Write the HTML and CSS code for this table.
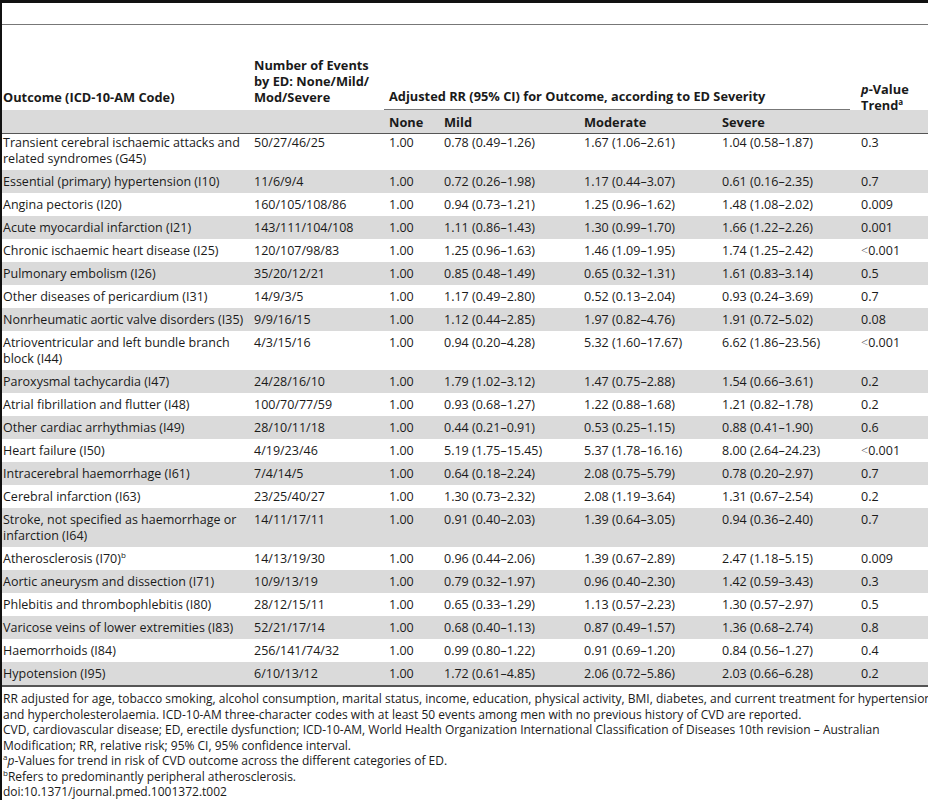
FILE: index.html
```html
<!DOCTYPE html>
<html lang="en">
<head>
    <meta charset="UTF-8">
    <meta name="viewport" content="width=device-width, initial-scale=1.0">
    <title>Table 2. ED severity and CVD outcomes</title>
    <link rel="stylesheet" href="styles.css">
</head>
<body>
    <div class="page">
        <div class="table-box">
            <table class="data">
                <colgroup>
                    <col class="c-outcome">
                    <col class="c-events">
                    <col class="c-none">
                    <col class="c-mild">
                    <col class="c-mod">
                    <col class="c-sev">
                    <col class="c-p">
                </colgroup>
                <thead>
                    <tr class="head-top">
                        <th>Outcome (ICD-10-AM Code)</th>
                        <th>Number of Events by ED: None/Mild/ Mod/Severe</th>
                        <th colspan="4" class="span-head"><div class="under">Adjusted RR (95% CI) for Outcome, according to ED Severity</div></th>
                        <th class="p-head"><div class="p-text"><i>p</i>-Value Trend<sup>a</sup></div></th>
                    </tr>
                    <tr class="head-sub">
                        <th></th>
                        <th></th>
                        <th>None</th>
                        <th>Mild</th>
                        <th>Moderate</th>
                        <th>Severe</th>
                        <th></th>
                    </tr>
                </thead>
                <tbody>
                    <tr><td>Transient cerebral ischaemic attacks and related syndromes (G45)</td><td>50/27/46/25</td><td>1.00</td><td>0.78 (0.49–1.26)</td><td>1.67 (1.06–2.61)</td><td>1.04 (0.58–1.87)</td><td>0.3</td></tr>
                    <tr><td>Essential (primary) hypertension (I10)</td><td>11/6/9/4</td><td>1.00</td><td>0.72 (0.26–1.98)</td><td>1.17 (0.44–3.07)</td><td>0.61 (0.16–2.35)</td><td>0.7</td></tr>
                    <tr><td>Angina pectoris (I20)</td><td>160/105/108/86</td><td>1.00</td><td>0.94 (0.73–1.21)</td><td>1.25 (0.96–1.62)</td><td>1.48 (1.08–2.02)</td><td>0.009</td></tr>
                    <tr><td>Acute myocardial infarction (I21)</td><td>143/111/104/108</td><td>1.00</td><td>1.11 (0.86–1.43)</td><td>1.30 (0.99–1.70)</td><td>1.66 (1.22–2.26)</td><td>0.001</td></tr>
                    <tr><td>Chronic ischaemic heart disease (I25)</td><td>120/107/98/83</td><td>1.00</td><td>1.25 (0.96–1.63)</td><td>1.46 (1.09–1.95)</td><td>1.74 (1.25–2.42)</td><td><span class="lt">&lt;</span>0.001</td></tr>
                    <tr><td>Pulmonary embolism (I26)</td><td>35/20/12/21</td><td>1.00</td><td>0.85 (0.48–1.49)</td><td>0.65 (0.32–1.31)</td><td>1.61 (0.83–3.14)</td><td>0.5</td></tr>
                    <tr><td>Other diseases of pericardium (I31)</td><td>14/9/3/5</td><td>1.00</td><td>1.17 (0.49–2.80)</td><td>0.52 (0.13–2.04)</td><td>0.93 (0.24–3.69)</td><td>0.7</td></tr>
                    <tr><td>Nonrheumatic aortic valve disorders (I35)</td><td>9/9/16/15</td><td>1.00</td><td>1.12 (0.44–2.85)</td><td>1.97 (0.82–4.76)</td><td>1.91 (0.72–5.02)</td><td>0.08</td></tr>
                    <tr><td>Atrioventricular and left bundle branch block (I44)</td><td>4/3/15/16</td><td>1.00</td><td>0.94 (0.20–4.28)</td><td>5.32 (1.60–17.67)</td><td>6.62 (1.86–23.56)</td><td><span class="lt">&lt;</span>0.001</td></tr>
                    <tr><td>Paroxysmal tachycardia (I47)</td><td>24/28/16/10</td><td>1.00</td><td>1.79 (1.02–3.12)</td><td>1.47 (0.75–2.88)</td><td>1.54 (0.66–3.61)</td><td>0.2</td></tr>
                    <tr><td>Atrial fibrillation and flutter (I48)</td><td>100/70/77/59</td><td>1.00</td><td>0.93 (0.68–1.27)</td><td>1.22 (0.88–1.68)</td><td>1.21 (0.82–1.78)</td><td>0.2</td></tr>
                    <tr><td>Other cardiac arrhythmias (I49)</td><td>28/10/11/18</td><td>1.00</td><td>0.44 (0.21–0.91)</td><td>0.53 (0.25–1.15)</td><td>0.88 (0.41–1.90)</td><td>0.6</td></tr>
                    <tr><td>Heart failure (I50)</td><td>4/19/23/46</td><td>1.00</td><td>5.19 (1.75–15.45)</td><td>5.37 (1.78–16.16)</td><td>8.00 (2.64–24.23)</td><td><span class="lt">&lt;</span>0.001</td></tr>
                    <tr><td>Intracerebral haemorrhage (I61)</td><td>7/4/14/5</td><td>1.00</td><td>0.64 (0.18–2.24)</td><td>2.08 (0.75–5.79)</td><td>0.78 (0.20–2.97)</td><td>0.7</td></tr>
                    <tr><td>Cerebral infarction (I63)</td><td>23/25/40/27</td><td>1.00</td><td>1.30 (0.73–2.32)</td><td>2.08 (1.19–3.64)</td><td>1.31 (0.67–2.54)</td><td>0.2</td></tr>
                    <tr><td>Stroke, not specified as haemorrhage or infarction (I64)</td><td>14/11/17/11</td><td>1.00</td><td>0.91 (0.40–2.03)</td><td>1.39 (0.64–3.05)</td><td>0.94 (0.36–2.40)</td><td>0.7</td></tr>
                    <tr><td>Atherosclerosis (I70)<sup>b</sup></td><td>14/13/19/30</td><td>1.00</td><td>0.96 (0.44–2.06)</td><td>1.39 (0.67–2.89)</td><td>2.47 (1.18–5.15)</td><td>0.009</td></tr>
                    <tr><td>Aortic aneurysm and dissection (I71)</td><td>10/9/13/19</td><td>1.00</td><td>0.79 (0.32–1.97)</td><td>0.96 (0.40–2.30)</td><td>1.42 (0.59–3.43)</td><td>0.3</td></tr>
                    <tr><td>Phlebitis and thrombophlebitis (I80)</td><td>28/12/15/11</td><td>1.00</td><td>0.65 (0.33–1.29)</td><td>1.13 (0.57–2.23)</td><td>1.30 (0.57–2.97)</td><td>0.5</td></tr>
                    <tr><td>Varicose veins of lower extremities (I83)</td><td>52/21/17/14</td><td>1.00</td><td>0.68 (0.40–1.13)</td><td>0.87 (0.49–1.57)</td><td>1.36 (0.68–2.74)</td><td>0.8</td></tr>
                    <tr><td>Haemorrhoids (I84)</td><td>256/141/74/32</td><td>1.00</td><td>0.99 (0.80–1.22)</td><td>0.91 (0.69–1.20)</td><td>0.84 (0.56–1.27)</td><td>0.4</td></tr>
                    <tr><td>Hypotension (I95)</td><td>6/10/13/12</td><td>1.00</td><td>1.72 (0.61–4.85)</td><td>2.06 (0.72–5.86)</td><td>2.03 (0.66–6.28)</td><td>0.2</td></tr>
                </tbody>
            </table>
        </div>
        <div class="notes">
            <p>RR adjusted for age, tobacco smoking, alcohol consumption, marital status, income, education, physical activity, BMI, diabetes, and current treatment for hypertension and hypercholesterolaemia. ICD-10-AM three-character codes with at least 50 events among men with no previous history of CVD are reported.</p>
            <p>CVD, cardiovascular disease; ED, erectile dysfunction; ICD-10-AM, World Health Organization International Classification of Diseases 10th revision – Australian Modification; RR, relative risk; 95% CI, 95% confidence interval.</p>
            <p><sup>a</sup><i>p</i>-Values for trend in risk of CVD outcome across the different categories of ED.</p>
            <p><sup>b</sup>Refers to predominantly peripheral atherosclerosis.</p>
            <p>doi:10.1371/journal.pmed.1001372.t002</p>
        </div>
    </div>
</body>
</html>
```

FILE: styles.css
```css
body {
    margin: 0;
    background-color: white;
    font-family: "Open Sans", "Liberation Sans", sans-serif;
    font-size: 12.5px;
    color: #1a1a1a;
}
.page {
    border-left: 2px solid #111;
    min-height: 800px;
    overflow: hidden;
}
.table-box {
    border-top: 3px solid #111;
    padding-top: 21px;
}
.data {
    width: 100%;
    border-collapse: collapse;
    table-layout: fixed;
    border-top: 1px solid #777;
    border-bottom: 2px solid #555;
}
.c-outcome { width: 247px; }
.c-events { width: 135px; }
.c-none { width: 55px; }
.c-mild { width: 140px; }
.c-mod { width: 138px; }
.c-sev { width: 139px; }
.c-p { width: 72px; }
th, td {
    text-align: left;
    line-height: 16px;
    padding: 4px 6px 3px 5px;
    vertical-align: top;
}
th:first-child, td:first-child {
    padding-left: 1px;
    padding-right: 1px;
}
th {
    font-weight: bold;
    font-size: 12.8px;
}
.head-top th {
    vertical-align: bottom;
    padding-top: 32px;
    padding-bottom: 5px;
}
.head-top .span-head {
    padding-right: 0;
    padding-left: 0;
    padding-bottom: 0;
}
.under {
    border-bottom: 1px solid #777;
    margin-right: 6px;
    padding: 0 0 5px 5px;
}
.head-top .p-head {
    padding-bottom: 0;
}
.p-text {
    margin-bottom: -3px;
}
.head-sub th {
    background-color: #dadada;
    border-bottom: 1px solid #555;
    padding-top: 4px;
    padding-bottom: 3px;
}
tbody tr:first-child td {
    padding-top: 1px;
}
tbody tr:nth-child(even) td {
    background-color: #dadada;
}
sup {
    font-size: 8px;
    line-height: 0;
    vertical-align: 5px;
}
.lt {
    font-weight: 300;
    color: #555;
}
.notes {
    width: 945px;
    padding: 4px 0 0 1px;
    font-size: 12px;
    line-height: 15.5px;
}
.notes p {
    margin: 0;
}
```
